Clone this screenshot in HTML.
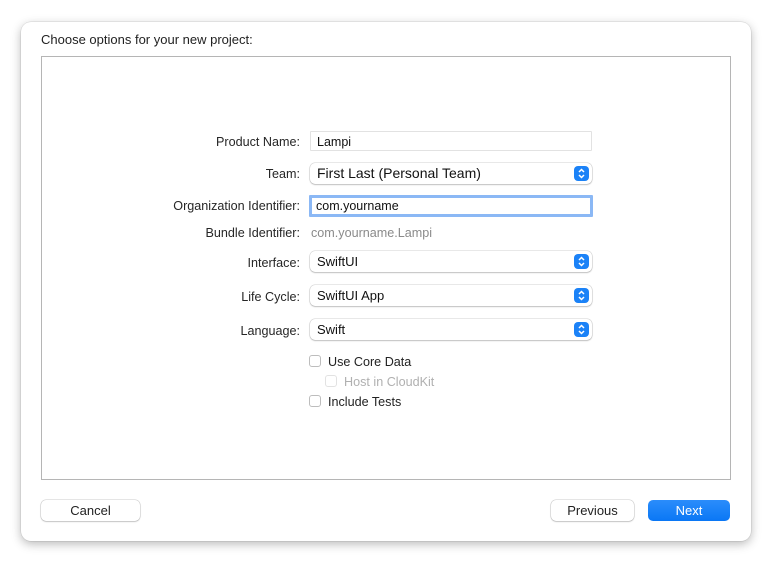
<!DOCTYPE html>
<html><head><style>
body{margin:0;width:772px;height:562px;background:#fff;font-family:"Liberation Sans",sans-serif;position:relative;overflow:hidden}
.win{position:absolute;left:21px;top:22px;width:730px;height:519px;background:#fff;border-radius:10px;box-shadow:0 3px 10px rgba(0,0,0,.28),0 0 0 .5px rgba(0,0,0,.12)}
.t{position:absolute;font-size:13px;color:#222}
.box{position:absolute;left:41px;top:56px;width:688px;height:422px;border:1px solid #b5b5b5}
.lbl{position:absolute;right:472px;font-size:12.6px;color:#262626;text-align:right;white-space:nowrap}
.fld{position:absolute;left:310px;width:282px;height:20px;border:1px solid #e2e2e2;border-radius:1px;font-size:12.5px;line-height:20px;padding-left:6px;box-sizing:border-box;color:#111}
.pop{position:absolute;left:310px;width:282px;height:21px;border-radius:5px;background:#fff;box-shadow:0 0 0 .5px rgba(0,0,0,.18),0 1px 1.5px rgba(0,0,0,.18);font-size:13px;line-height:21px;padding-left:7px;box-sizing:border-box;color:#111}
.pop .a{position:absolute;right:3px;top:3px;width:15px;height:15px;border-radius:4px;background:#1b82f7}
.cb{position:absolute;width:12px;height:12px;border:1px solid #bdbdbd;border-radius:3px;background:#fff;box-sizing:border-box}
.ct{position:absolute;font-size:12.6px;color:#222}
.btn{position:absolute;top:500px;height:21px;border-radius:5px;font-size:13px;line-height:21px;text-align:center;background:#fff;box-shadow:0 0 0 .5px rgba(0,0,0,.2),0 1px 1.5px rgba(0,0,0,.15);color:#222}
</style></head><body>
<div class="win"></div>
<div class="t" style="left:41px;top:32px">Choose options for your new project:</div>
<div class="box"></div>

<div class="lbl" style="top:135px">Product Name:</div>
<div class="fld" style="top:131px">Lampi</div>

<div class="lbl" style="top:167px">Team:</div>
<div class="pop" style="top:163px;font-size:14px">First Last (Personal Team)<div class="a"><svg width="15" height="15"><path d="M5 6L7.5 3.5L10 6M5 9L7.5 11.5L10 9" fill="none" stroke="#fff" stroke-width="1.5"/></svg></div></div>

<div class="lbl" style="top:199px">Organization Identifier:</div>
<div class="fld" style="top:195px;left:309px;width:284px;height:22px;border:3px solid #8bb8f5;line-height:16px;padding-left:4px">com.yourname</div>

<div class="lbl" style="top:226px">Bundle Identifier:</div>
<div class="ct" style="left:311px;top:226px;color:#8a8a8a">com.yourname.Lampi</div>

<div class="lbl" style="top:256px">Interface:</div>
<div class="pop" style="top:251px">SwiftUI<div class="a"><svg width="15" height="15"><path d="M5 6L7.5 3.5L10 6M5 9L7.5 11.5L10 9" fill="none" stroke="#fff" stroke-width="1.5"/></svg></div></div>

<div class="lbl" style="top:290px">Life Cycle:</div>
<div class="pop" style="top:285px">SwiftUI App<div class="a"><svg width="15" height="15"><path d="M5 6L7.5 3.5L10 6M5 9L7.5 11.5L10 9" fill="none" stroke="#fff" stroke-width="1.5"/></svg></div></div>

<div class="lbl" style="top:324px">Language:</div>
<div class="pop" style="top:319px">Swift<div class="a"><svg width="15" height="15"><path d="M5 6L7.5 3.5L10 6M5 9L7.5 11.5L10 9" fill="none" stroke="#fff" stroke-width="1.5"/></svg></div></div>

<div class="cb" style="left:309px;top:355px"></div><div class="ct" style="left:328px;top:355px">Use Core Data</div>
<div class="cb" style="left:325px;top:375px;border-color:#e2e2e2"></div><div class="ct" style="left:344px;top:375px;color:#b0b0b0">Host in CloudKit</div>
<div class="cb" style="left:309px;top:395px"></div><div class="ct" style="left:328px;top:395px">Include Tests</div>

<div class="btn" style="left:41px;width:99px">Cancel</div>
<div class="btn" style="left:551px;width:83px">Previous</div>
<div class="btn" style="left:648px;width:82px;background:linear-gradient(#2b8dfb,#0a77f5);color:#fff;box-shadow:none">Next</div>
</body></html>
